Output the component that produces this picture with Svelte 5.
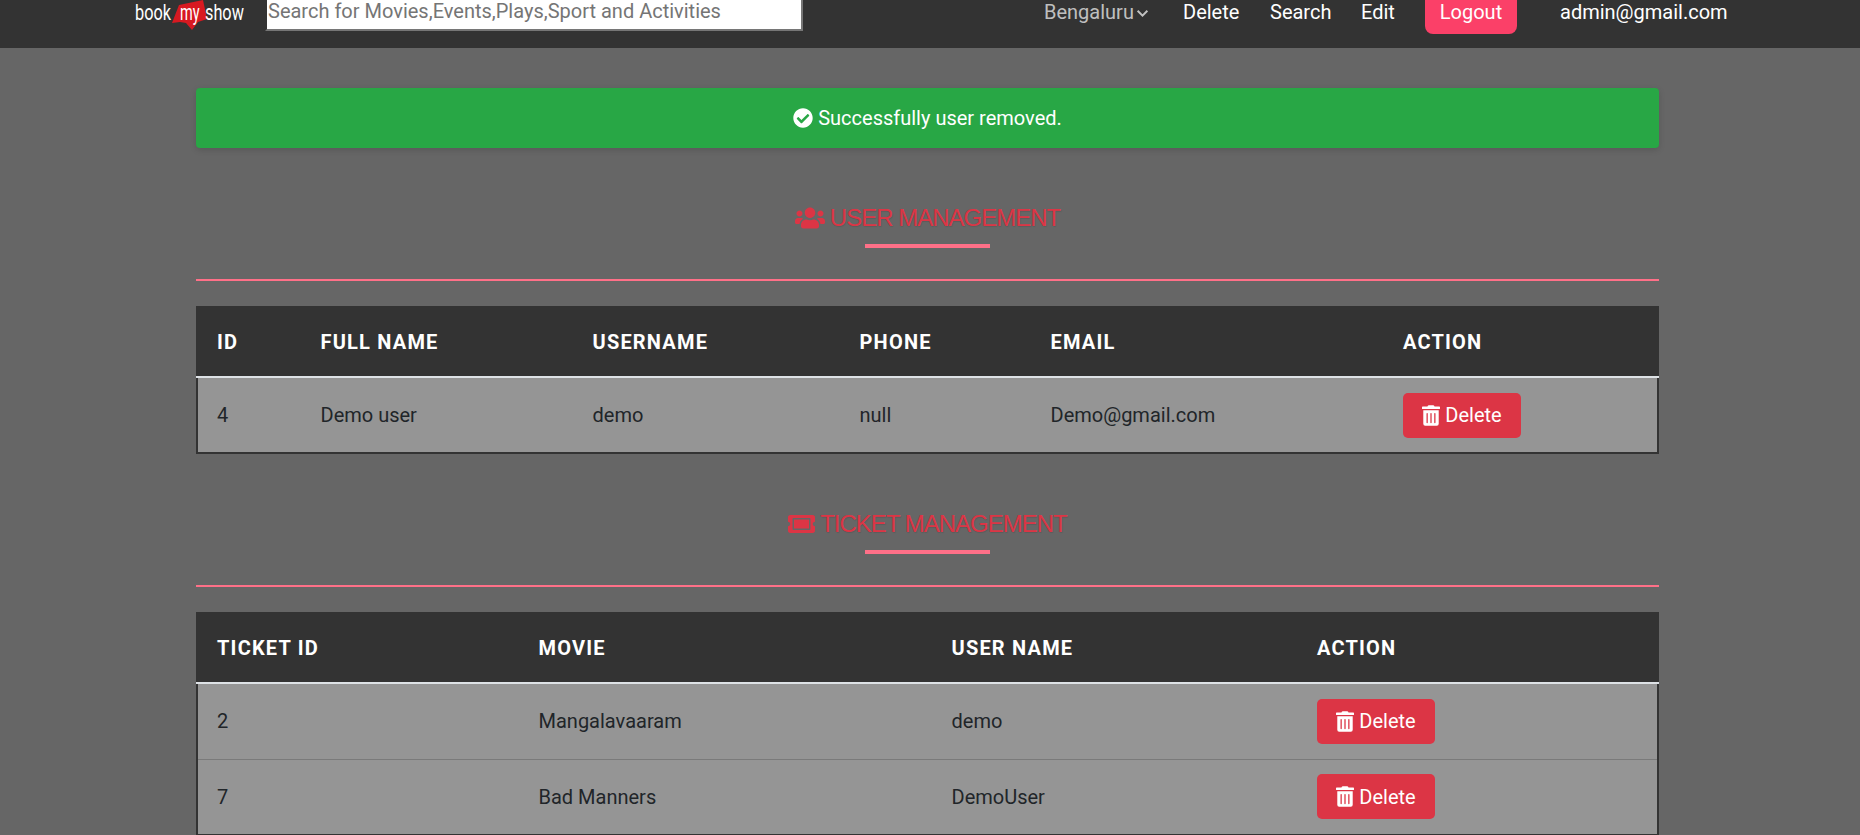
<script>
    const users = [{ id: 4, name: 'Demo user', username: 'demo', phone: 'null', email: 'Demo@gmail.com' }];
    const tickets = [
        { id: 2, movie: 'Mangalavaaram', user: 'demo' },
        { id: 7, movie: 'Bad Manners', user: 'DemoUser' }
    ];
</script>

{#snippet deleteBtn()}
    <button class="btn-delete">
        <svg class="trash" viewBox="0 0 448 512"><path fill="currentColor" d="M32 464a48 48 0 0 0 48 48h288a48 48 0 0 0 48-48V128H32zm272-256a16 16 0 0 1 32 0v224a16 16 0 0 1-32 0zm-96 0a16 16 0 0 1 32 0v224a16 16 0 0 1-32 0zm-96 0a16 16 0 0 1 32 0v224a16 16 0 0 1-32 0zM432 32H312l-9.4-18.7A24 24 0 0 0 281.1 0H166.8a23.72 23.72 0 0 0-21.4 13.3L136 32H16A16 16 0 0 0 0 48v32a16 16 0 0 0 16 16h416a16 16 0 0 0 16-16V48a16 16 0 0 0-16-16z"/></svg>
        Delete
    </button>
{/snippet}

<div class="page">
    <header class="navbar">
        <div class="brand">
            <span class="logo-word">book</span>
            <span class="logo-my">
                <svg class="logo-flag" viewBox="0 0 35 30"><path fill="#d71921" d="M0 23L7 5L31 0L35 19L26 22L20 30L14 23L8 22Z"/></svg>
                <span class="logo-my-text">my</span>
            </span>
            <span class="logo-word show">show</span>
        </div>
        <input class="search" placeholder="Search for Movies,Events,Plays,Sport and Activities" />
        <nav class="nav-links">
            <span class="city">Bengaluru
                <svg class="chevron" viewBox="0 0 12 8"><path d="M1.5 1.500L6 6l4.500-4.500" fill="none" stroke="currentColor" stroke-width="1.800"/></svg>
            </span>
            <a href="#delete">Delete</a>
            <a href="#search">Search</a>
            <a href="#edit">Edit</a>
            <button class="logout">Logout</button>
            <span class="admin">admin@gmail.com</span>
        </nav>
    </header>

    <main class="container">
        <div class="alert">
            <svg class="check" viewBox="0 0 512 512"><path fill="currentColor" d="M504 256c0 136.967-111.033 248-248 248S8 392.967 8 256 119.033 8 256 8s248 111.033 248 248zM227.314 387.314l184-184c6.248-6.248 6.248-16.379 0-22.627l-22.627-22.627c-6.248-6.249-16.379-6.249-22.628 0L216 308.118l-70.059-70.059c-6.248-6.248-16.379-6.248-22.628 0l-22.627 22.627c-6.248 6.248-6.248 16.379 0 22.627l104 104c6.249 6.249 16.379 6.249 22.628.001z"/></svg>
            Successfully user removed.
        </div>

        <section class="block first">
            <h2 class="title">
                <svg class="title-icon" viewBox="0 0 640 512"><path fill="currentColor" d="M96 224c35.300 0 64-28.700 64-64s-28.700-64-64-64-64 28.700-64 64 28.700 64 64 64zm448 0c35.300 0 64-28.700 64-64s-28.700-64-64-64-64 28.700-64 64 28.700 64 64 64zm32 32h-64c-17.600 0-33.500 7.100-45.100 18.600 40.300 22.100 68.900 62 75.100 109.400h66c17.700 0 32-14.300 32-32v-32c0-35.300-28.700-64-64-64zm-256 0c61.900 0 112-50.100 112-112S381.900 32 320 32 208 82.100 208 144s50.100 112 112 112zm76.800 32h-8.300c-20.800 10-43.900 16-68.500 16s-47.600-6-68.500-16h-8.300C179.600 288 128 339.600 128 403.200V432c0 26.500 21.500 48 48 48h288c26.500 0 48-21.500 48-48v-28.800c0-63.600-51.600-115.200-115.200-115.200zm-223.700-13.400C161.500 263.100 145.600 256 128 256H64c-35.300 0-64 28.700-64 64v32c0 17.700 14.300 32 32 32h65.900c6.300-47.400 34.900-87.300 75.200-109.400z"/></svg>
                USER MANAGEMENT
            </h2>
            <div class="underline"></div>
            <hr class="rule" />
            <table>
                <colgroup>
                    <col style="width: 103px" />
                    <col style="width: 272px" />
                    <col style="width: 267px" />
                    <col style="width: 191px" />
                    <col style="width: 352px" />
                    <col />
                </colgroup>
                <thead>
                    <tr><th>ID</th><th>FULL NAME</th><th>USERNAME</th><th>PHONE</th><th>EMAIL</th><th>ACTION</th></tr>
                </thead>
                <tbody>
                    {#each users as u}
                        <tr>
                            <td>{u.id}</td><td>{u.name}</td><td>{u.username}</td><td>{u.phone}</td><td>{u.email}</td>
                            <td>{@render deleteBtn()}</td>
                        </tr>
                    {/each}
                </tbody>
            </table>
        </section>

        <section class="block">
            <h2 class="title">
                <svg class="title-icon ticket" viewBox="0 0 576 512"><path fill="currentColor" d="M128 160h320v192H128V160zm400 96c0 26.510 21.490 48 48 48v96c0 26.510-21.490 48-48 48H48c-26.510 0-48-21.490-48-48v-96c26.510 0 48-21.490 48-48s-21.490-48-48-48v-96c0-26.510 21.490-48 48-48h480c26.510 0 48 21.490 48 48v96c-26.510 0-48 21.490-48 48zm-48-104c0-13.255-10.745-24-24-24H120c-13.255 0-24 10.745-24 24v208c0 13.255 10.745 24 24 24h336c13.255 0 24-10.745 24-24V152z"/></svg>
                TICKET MANAGEMENT
            </h2>
            <div class="underline"></div>
            <hr class="rule" />
            <table>
                <colgroup>
                    <col style="width: 321px" />
                    <col style="width: 413px" />
                    <col style="width: 365px" />
                    <col />
                </colgroup>
                <thead>
                    <tr><th>TICKET ID</th><th>MOVIE</th><th>USER NAME</th><th>ACTION</th></tr>
                </thead>
                <tbody>
                    {#each tickets as t}
                        <tr>
                            <td>{t.id}</td><td>{t.movie}</td><td>{t.user}</td>
                            <td>{@render deleteBtn()}</td>
                        </tr>
                    {/each}
                </tbody>
            </table>
        </section>
    </main>
</div>

<style>
    :global(body) {
        margin: 0;
        background: #666;
        font-family: Roboto, "Liberation Sans", sans-serif;
        overflow: hidden;
    }

    .page {
        height: 835px;
        overflow: hidden;
        background: #666;
    }

    .navbar {
        height: 48px;
        background: #333;
        display: flex;
        align-items: flex-start;
        box-sizing: border-box;
        padding-left: 134px;
        color: #fff;
        font-size: 20px;
    }

    .brand {
        width: 131px;
        height: 34px;
        flex: none;
        display: flex;
        align-items: flex-start;
        font-size: 22px;
        line-height: 26px;
    }

    .logo-word {
        display: inline-block;
        width: 37px;
        margin-left: 1px;
        transform: scaleX(0.74);
        transform-origin: left center;
        white-space: nowrap;
    }

    .logo-word.show {
        margin-left: -2px;
    }

    .logo-my {
        position: relative;
        width: 35px;
        height: 30px;
        flex: none;
    }

    .logo-flag {
        position: absolute;
        left: 0;
        top: 0;
        width: 35px;
        height: 30px;
    }

    .logo-my-text {
        position: absolute;
        left: 8px;
        top: 0;
        transform: scaleX(0.66);
        transform-origin: left center;
    }

    .search {
        width: 538px;
        height: 40px;
        margin-top: -9px;
        box-sizing: border-box;
        flex: none;
        padding: 1px;
        background: #fff;
        border-style: solid;
        border-width: 2px;
        border-color: #333 #767676 #767676 #333;
        font-family: inherit;
        font-size: 20px;
    }

    .search::placeholder {
        color: #757575;
    }

    .nav-links {
        display: flex;
        align-items: flex-start;
        margin-left: 241px;
        line-height: 24px;
    }

    .city {
        color: rgba(255, 255, 255, 0.7);
        width: 139px;
        flex: none;
        white-space: nowrap;
    }

    .chevron {
        width: 13px;
        height: 9px;
        margin-left: -3px;
        vertical-align: 1px;
    }

    .nav-links a {
        color: #fff;
        text-decoration: none;
    }

    .nav-links a:nth-of-type(1) {
        width: 87px;
    }

    .nav-links a:nth-of-type(2) {
        width: 91px;
    }

    .nav-links a:nth-of-type(3) {
        width: 64px;
    }

    .logout {
        width: 92px;
        height: 34px;
        padding: 0 0 12px;
        border: none;
        border-radius: 0 0 8px 8px;
        background: #fb4068;
        color: #fff;
        font-family: inherit;
        font-size: 20px;
    }

    .admin {
        margin-left: 43px;
    }

    .container {
        width: 1463px;
        margin-left: 196px;
        padding-top: 40px;
    }

    .alert {
        height: 60px;
        display: flex;
        align-items: center;
        justify-content: center;
        gap: 5px;
        background: #28a745;
        border-radius: 4px;
        box-shadow: 0 2px 6px rgba(0, 0, 0, 0.15);
        color: #fff;
        font-size: 20px;
    }

    .check {
        width: 20px;
        height: 20px;
    }

    .block {
        margin-top: 54px;
    }

    .title {
        margin: 0;
        height: 32px;
        display: flex;
        align-items: center;
        justify-content: center;
        gap: 5px;
        color: #dc3545;
        font-family: "Liberation Sans", sans-serif;
        font-size: 24px;
        font-weight: 400;
        letter-spacing: -1px;
        text-shadow: 1px 1px 1px rgba(0, 0, 0, 0.1);
    }

    .title-icon {
        width: 30px;
        height: 24px;
    }

    .title-icon.ticket {
        width: 27px;
    }

    .underline {
        width: 125px;
        height: 4px;
        margin: 10px auto 0;
        background: #ff7088;
    }

    .rule {
        margin: 31px 0 25px;
        border: none;
        border-top: 2px solid #ff7088;
    }

    table {
        width: 100%;
        table-layout: fixed;
        border-collapse: collapse;
        border: 2px solid #333;
        border-top: none;
        background: #959595;
        color: #212529;
        font-size: 20px;
    }

    th {
        height: 71px;
        padding: 2px 0 0 20.5px;
        box-sizing: border-box;
        background: #333;
        color: #fff;
        font-weight: 700;
        text-align: left;
        letter-spacing: 1.2px;
        border-bottom: 2px solid #dee2e6;
    }

    th:first-child {
        padding-left: 19px;
    }

    th:last-child {
        padding-left: 21px;
    }

    td {
        height: 76px;
        padding: 0 0 0 20.5px;
        box-sizing: border-box;
        border-top: 1px solid #7a7a7a;
    }

    td:first-child {
        padding-left: 19px;
    }

    td:last-child {
        padding-left: 21px;
    }

    tbody tr:first-child td {
        border-top: none;
    }

    .btn-delete {
        height: 45px;
        width: 118px;
        display: inline-flex;
        align-items: center;
        justify-content: center;
        gap: 5px;
        border: none;
        border-radius: 5px;
        background: #dc3545;
        color: #fff;
        font-family: inherit;
        font-size: 20px;
        vertical-align: middle;
    }

    .trash {
        width: 18px;
        height: 21px;
    }
</style>
